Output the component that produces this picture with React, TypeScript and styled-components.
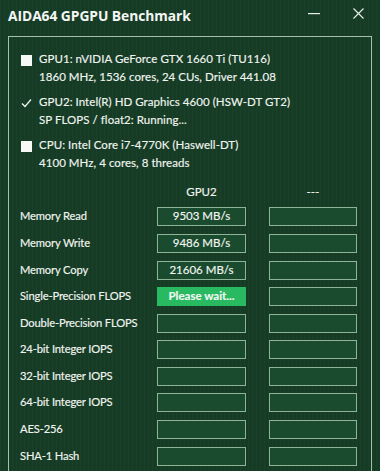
import React from 'react';
import styled, { createGlobalStyle } from 'styled-components';

const GlobalStyle = createGlobalStyle`
  html, body {
    margin: 0;
    padding: 0;
  }
  body {
    background: #163c25;
    font-family: Lato, "Noto Sans", sans-serif;
    color: #f1f5f1;
  }
`;

const Window = styled.div`
  width: 380px;
  height: 471px;
  overflow: hidden;
  background-color: #163c25;
  background-image: repeating-linear-gradient(
    90deg,
    rgba(255, 255, 255, 0.018) 0px,
    rgba(255, 255, 255, 0.018) 1px,
    rgba(0, 0, 0, 0.03) 2px,
    rgba(0, 0, 0, 0) 4px
  );
  display: flex;
  flex-direction: column;
`;

const TitleBar = styled.div`
  height: 36px;
  flex-shrink: 0;
  display: flex;
  align-items: flex-start;
  padding: 6px 0 0 8px;
  box-sizing: border-box;
`;

const Title = styled.div`
  flex: 1;
  font-family: "Open Sans", "Noto Sans", sans-serif;
  font-weight: 700;
  font-size: 13.8px;
  letter-spacing: -0.05px;
  color: #f4f7f4;
`;

const TitleButton = styled.div`
  width: 44px;
  height: 15px;
  display: flex;
  justify-content: center;
  align-items: center;
`;

const Panel = styled.div`
  margin: 0 8px;
  border: 1px solid #a4c2aa;
  border-bottom: none;
  flex: 1;
  padding: 13px 0 0 12px;
  -webkit-text-stroke: 0.15px #f1f5f1;
`;

const DeviceList = styled.div`
  display: flex;
  flex-direction: column;
  gap: 7.5px;
`;

const Device = styled.div`
  display: grid;
  grid-template-columns: 11px 1fr;
  column-gap: 7px;
  font-size: 11.5px;
  line-height: 17.7px;
  letter-spacing: 0.05px;
`;

const Check = styled.div<{ checked?: boolean }>`
  width: 11px;
  height: 11px;
  margin-top: 5px;
  background: ${({ checked }) => (checked ? 'transparent' : '#f7f9f7')};
  display: flex;
  align-items: center;
  justify-content: center;
`;

const Line = styled.div`
  grid-column: 2;
  white-space: nowrap;
`;

const Results = styled.div`
  display: grid;
  grid-template-columns: 114px 89px 88px;
  grid-template-rows: 22.8px;
  column-gap: 23px;
  grid-auto-rows: 26.6px;
  margin-top: 13.3px;
  margin-left: -1px;
  font-size: 11.2px;
`;

const ColHead = styled.div`
  display: flex;
  align-items: center;
  justify-content: center;
  height: 14px;
  align-self: start;
  font-size: 11.5px;
`;

const Label = styled.div`
  display: flex;
  align-items: center;
  height: 19px;
  padding-bottom: 2px;
  box-sizing: border-box;
  white-space: nowrap;
  letter-spacing: -0.15px;
`;

const Cell = styled.div<{ active?: boolean }>`
  height: 19px;
  box-sizing: border-box;
  padding-bottom: 2px;
  border: 1px solid ${({ active }) => (active ? '#28b961' : '#8fb397')};
  background: ${({ active }) => (active ? '#28b961' : '#1b4b2e')};
  display: flex;
  align-items: center;
  justify-content: center;
  font-size: 11.5px;
  font-weight: ${({ active }) => (active ? 700 : 400)};
  color: #f3f7f3;
  white-space: nowrap;
`;

const rows: [string, string][] = [
  ['Memory Read', '9503 MB/s'],
  ['Memory Write', '9486 MB/s'],
  ['Memory Copy', '21606 MB/s'],
  ['Single-Precision FLOPS', 'Please wait...'],
  ['Double-Precision FLOPS', ''],
  ['24-bit Integer IOPS', ''],
  ['32-bit Integer IOPS', ''],
  ['64-bit Integer IOPS', ''],
  ['AES-256', ''],
  ['SHA-1 Hash', ''],
];

const devices = [
  { checked: false, lines: ['GPU1: nVIDIA GeForce GTX 1660 Ti (TU116)', '1860 MHz, 1536 cores, 24 CUs, Driver 441.08'] },
  { checked: true, lines: ['GPU2: Intel(R) HD Graphics 4600 (HSW-DT GT2)', 'SP FLOPS / float2: Running...'] },
  { checked: false, lines: ['CPU: Intel Core i7-4770K (Haswell-DT)', '4100 MHz, 4 cores, 8 threads'] },
];

const App = () => {
  return (
    <Window>
      <GlobalStyle />
      <TitleBar>
        <Title>AIDA64 GPGPU Benchmark</Title>
        <TitleButton>
          <svg width="12" height="2" viewBox="0 0 12 2">
            <rect x="0" y="0" width="12" height="1.2" fill="#e8efe9" />
          </svg>
        </TitleButton>
        <TitleButton>
          <svg width="11" height="11" viewBox="0 0 11 11">
            <path d="M0.5 0.5 L10.5 10.5 M10.5 0.5 L0.5 10.5" stroke="#e8efe9" strokeWidth="1.1" />
          </svg>
        </TitleButton>
      </TitleBar>
      <Panel>
        <DeviceList>
          {devices.map((d, i) => (
            <Device key={i}>
              <Check checked={d.checked}>
                {d.checked && (
                  <svg width="11" height="11" viewBox="0 0 11 11">
                    <path d="M1 5.5 L4 8.5 L10 1.5" stroke="#f2f6f2" strokeWidth="1.2" fill="none" />
                  </svg>
                )}
              </Check>
              <Line>{d.lines[0]}</Line>
              <Line>{d.lines[1]}</Line>
            </Device>
          ))}
        </DeviceList>
        <Results>
          <div />
          <ColHead>GPU2</ColHead>
          <ColHead>---</ColHead>
          {rows.map(([label, value]) => (
            <React.Fragment key={label}>
              <Label>{label}</Label>
              <Cell active={value === 'Please wait...'}>{value}</Cell>
              <Cell />
            </React.Fragment>
          ))}
        </Results>
      </Panel>
    </Window>
  );
};

export default App;
